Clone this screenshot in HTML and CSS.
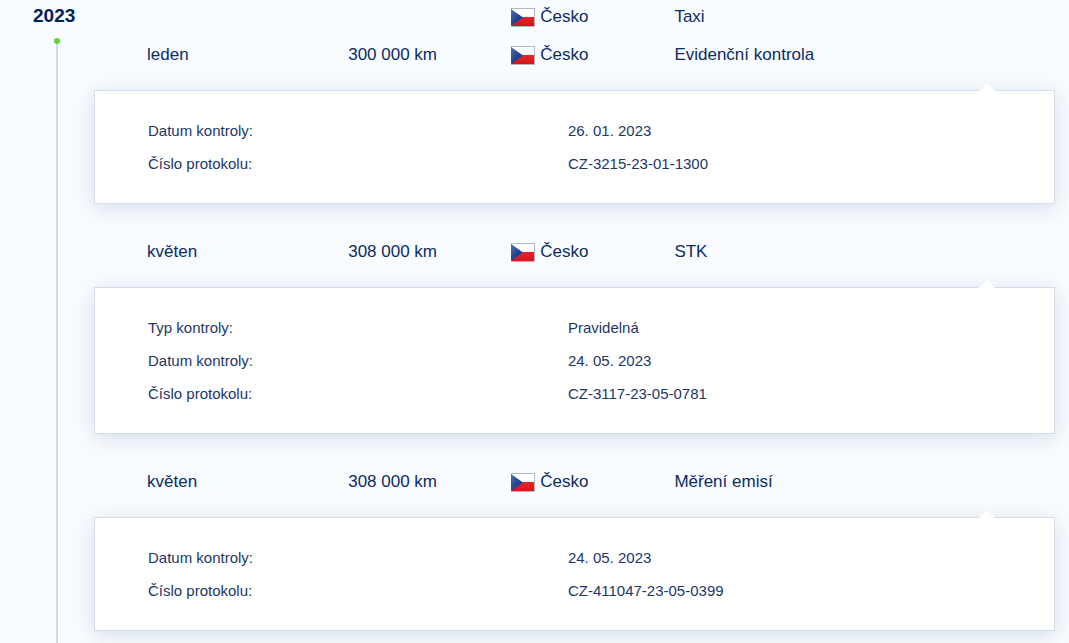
FILE: index.html
```
<!DOCTYPE html>
<html lang="cs">
<head>
  <meta charset="UTF-8">
  <meta name="viewport" content="width=device-width, initial-scale=1">
  <title>Historie vozidla</title>
  <link rel="stylesheet" href="styles.css">
</head>
<body>

<!-- Czech flag, reused in every record -->
<svg class="defs" width="0" height="0" aria-hidden="true">
  <defs>
    <linearGradient id="flag-blue" x1="0" y1="0" x2="1" y2="1">
      <stop offset="0" stop-color="#5273b4"/>
      <stop offset="0.5" stop-color="#27458f"/>
      <stop offset="1" stop-color="#152f7c"/>
    </linearGradient>
    <linearGradient id="flag-red" x1="0" y1="0" x2="0" y2="1">
      <stop offset="0" stop-color="#e4262b"/>
      <stop offset="1" stop-color="#d2161d"/>
    </linearGradient>
    <symbol id="flag-cz" viewBox="0 0 24 19">
      <rect x="0" y="0" width="24" height="19" fill="#b4b9c1"/>
      <rect x="1" y="1" width="22" height="9" fill="#fff"/>
      <rect x="1" y="9" width="22" height="9" fill="url(#flag-red)"/>
      <path d="M0 1 L12 9.5 L0 18 Z" fill="url(#flag-blue)"/>
    </symbol>
  </defs>
</svg>

<main class="timeline">
  <div class="year">
    <h2 class="year-label">2023</h2>
    <div class="year-line"></div>
  </div>

  <div class="events">
    <div class="record">
      <span></span>
      <span></span>
      <span class="country"><svg class="flag" aria-hidden="true"><use href="#flag-cz"/></svg>Česko</span>
      <span>Taxi</span>
    </div>

    <div class="record">
      <span>leden</span>
      <span>300 000 km</span>
      <span class="country"><svg class="flag" aria-hidden="true"><use href="#flag-cz"/></svg>Česko</span>
      <span>Evidenční kontrola</span>
    </div>
    <dl class="detail">
      <dt>Datum kontroly:</dt>
      <dd>26. 01. 2023</dd>
      <dt>Číslo protokolu:</dt>
      <dd>CZ-3215-23-01-1300</dd>
    </dl>

    <div class="record">
      <span>květen</span>
      <span>308 000 km</span>
      <span class="country"><svg class="flag" aria-hidden="true"><use href="#flag-cz"/></svg>Česko</span>
      <span>STK</span>
    </div>
    <dl class="detail">
      <dt>Typ kontroly:</dt>
      <dd>Pravidelná</dd>
      <dt>Datum kontroly:</dt>
      <dd>24. 05. 2023</dd>
      <dt>Číslo protokolu:</dt>
      <dd>CZ-3117-23-05-0781</dd>
    </dl>

    <div class="record">
      <span>květen</span>
      <span>308 000 km</span>
      <span class="country"><svg class="flag" aria-hidden="true"><use href="#flag-cz"/></svg>Česko</span>
      <span>Měření emisí</span>
    </div>
    <dl class="detail">
      <dt>Datum kontroly:</dt>
      <dd>24. 05. 2023</dd>
      <dt>Číslo protokolu:</dt>
      <dd>CZ-411047-23-05-0399</dd>
    </dl>
  </div>
</main>

</body>
</html>
```
FILE: styles.css
```
* {
  box-sizing: border-box;
}

body {
  margin: 0;
  background: #f9fcff;
  color: #0b2b63;
  font-family: "Liberation Sans", Arial, sans-serif;
  font-size: 17px;
  line-height: 32px;
}

.defs {
  position: absolute;
}

.timeline {
  display: flex;
  min-height: 100vh;
  padding-right: 14px;
}

/* left column with the year and the vertical line */
.year {
  display: flex;
  flex-direction: column;
  flex: 0 0 94px;
}

.year-label {
  margin: 0 0 9px;
  padding-left: 33px;
  color: #02215a;
  font-size: 19px;
  font-weight: bold;
}

.year-line {
  position: relative;
  flex: 1;
  width: 2px;
  margin-left: 56px;
  background: #c8dcea;
}

.year-line::before {
  content: "";
  position: absolute;
  top: -3px;
  left: -2px;
  width: 6px;
  height: 6px;
  border-radius: 50%;
  background: #62d344;
}

.events {
  flex: 1;
  min-width: 0;
  padding: 1px 0 12px;
}

.record {
  display: grid;
  grid-template-columns: 37fr 30fr 30fr 70fr;
  padding-left: 53px;
}

.record + .record {
  margin-top: 6px;
}

.detail + .record {
  margin-top: 32px;
}

.country {
  display: flex;
  align-items: center;
  gap: 5px;
}

.flag {
  width: 24px;
  height: 19px;
}

/* white box under the record */
.detail {
  position: relative;
  display: grid;
  grid-template-columns: 49% 1fr;
  margin: 19px 0 0;
  padding: 23px 49px 23px 53px;
  border: 1px solid #d3deea;
  background: #fff;
  box-shadow: 0 4px 20px rgba(20, 60, 120, 0.16);
  color: #1c3766;
  font-size: 15px;
  line-height: 33px;
}

.detail::before {
  content: "";
  position: absolute;
  top: -8px;
  right: 59px;
  width: 16px;
  height: 8px;
  background: #fff;
  clip-path: polygon(50% 0, 100% 100%, 0 100%);
}

.detail dd {
  margin: 0;
}
```
